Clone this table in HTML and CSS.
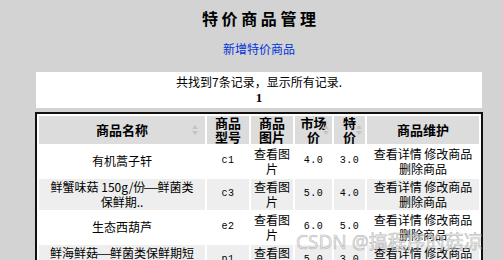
FILE: index.html
```html
<!DOCTYPE html>
<html lang="zh-CN">
<head>
<meta charset="utf-8">
<title>特价商品管理</title>
<link rel="stylesheet" href="styles.css">
</head>
<body>
<div class="page">
  <h3 class="title">特 价 商 品 管 理</h3>
  <div class="add"><a href="#">新增特价商品</a></div>
  <div class="summary">
    <div>共找到7条记录，显示所有记录.</div>
    <div class="pager">1</div>
  </div>
  <table class="grid">
    <colgroup>
      <col class="c1"><col class="c2"><col class="c3"><col class="c4"><col class="c5"><col class="c6">
    </colgroup>
    <thead>
      <tr>
        <th class="sort sort-wide">商品名称</th>
        <th>商品型号</th>
        <th>商品图片</th>
        <th class="sort">市场价</th>
        <th class="sort">特价</th>
        <th>商品维护</th>
      </tr>
    </thead>
    <tbody>
      <tr>
        <td>有机蒿子轩</td><td class="mono">c1</td><td>查看图片</td><td class="mono">4.0</td><td class="mono">3.0</td><td>查看详情 修改商品 删除商品</td>
      </tr>
      <tr class="alt">
        <td>鲜蟹味菇 150g/份<span class="dash">—</span>鲜菌类<br>保鲜期..</td><td class="mono">c3</td><td>查看图片</td><td class="mono">5.0</td><td class="mono">4.0</td><td>查看详情 修改商品 删除商品</td>
      </tr>
      <tr>
        <td>生态西葫芦</td><td class="mono">e2</td><td>查看图片</td><td class="mono">6.0</td><td class="mono">5.0</td><td>查看详情 修改商品 删除商品</td>
      </tr>
      <tr class="alt">
        <td>鲜海鲜菇<span class="dash">—</span>鲜菌类保鲜期短<br>暂..</td><td class="mono">p1</td><td>查看图片</td><td class="mono">5.0</td><td class="mono">3.0</td><td>查看详情 修改商品 删除商品</td>
      </tr>
    </tbody>
  </table>
</div>
<div class="watermark">CSDN @搞程序的菇凉</div>
</body>
</html>
```
FILE: styles.css
```css
html, body {
  margin: 0;
  padding: 0;
}
body {
  background: #d3d3d3;
  font-family: "Noto Sans CJK SC", sans-serif;
  font-size: 12px;
  color: #000;
  position: relative;
  overflow: hidden;
}
.page {
  padding: 8px 0 0 15px;
  display: flex;
  flex-direction: column;
  align-items: center;
}
.title {
  margin: 0;
  font-size: 16px;
  line-height: 20px;
  font-weight: bold;
  letter-spacing: 0;
}
.add {
  margin-top: 13px;
  line-height: 16px;
}
.add a {
  color: #0033dd;
  text-decoration: none;
}
.summary {
  margin-top: 15px;
  width: 446px;
  background: #fff;
  padding: 2px 0;
  text-align: center;
  line-height: 16px;
}
.pager {
  font-family: "Liberation Serif", serif;
  font-weight: bold;
  font-size: 13px;
}
.grid {
  margin-top: 4px;
  width: 448px;
  table-layout: fixed;
  border: 2px solid #111;
  border-collapse: separate;
  border-spacing: 2px;
  background: #fff;
}
.c1 { width: 166px; }
.c2 { width: 42px; }
.c3 { width: 42px; }
.c4 { width: 37px; }
.c5 { width: 31px; }
.c6 { width: 112px; }
.grid th {
  background: #dcdcdc;
  font-size: 13px;
  line-height: 14px;
  font-weight: bold;
  padding: 0 6px;
  height: 28px;
  text-align: center;
  position: relative;
}
.grid th.sort {
  padding: 0 5px;
}
.grid th.sort::before,
.grid th.sort::after {
  content: "";
  position: absolute;
  right: 3px;
  border-left: 3px solid transparent;
  border-right: 3px solid transparent;
}
.grid th.sort::before {
  top: calc(50% - 5px);
  border-bottom: 4px solid #c4c4c4;
}
.grid th.sort::after {
  top: calc(50% + 1px);
  border-top: 4px solid #c4c4c4;
}
.grid th.sort-wide::before,
.grid th.sort-wide::after {
  right: 7px;
}
.grid td {
  padding: 1px 1px;
  line-height: 14.5px;
  text-align: center;
  vertical-align: middle;
  background: #fff;
}
.grid tr.alt td {
  background: #eeeeee;
}
.grid td.mono {
  font-family: "Liberation Mono", monospace;
  font-size: 10px;
  letter-spacing: 0.5px;
}
.dash {
  display: inline-block;
  width: 12px;
  text-align: center;
  transform: scaleX(1.5);
}
.watermark {
  position: absolute;
  left: 296px;
  top: 230px;
  font-family: "Noto Sans", "Noto Sans CJK SC", sans-serif;
  font-size: 19px;
  line-height: 24px;
  color: rgba(225, 225, 225, 0.7);
  -webkit-text-stroke: 0.6px rgba(140, 140, 140, 0.55);
  white-space: nowrap;
}
```
